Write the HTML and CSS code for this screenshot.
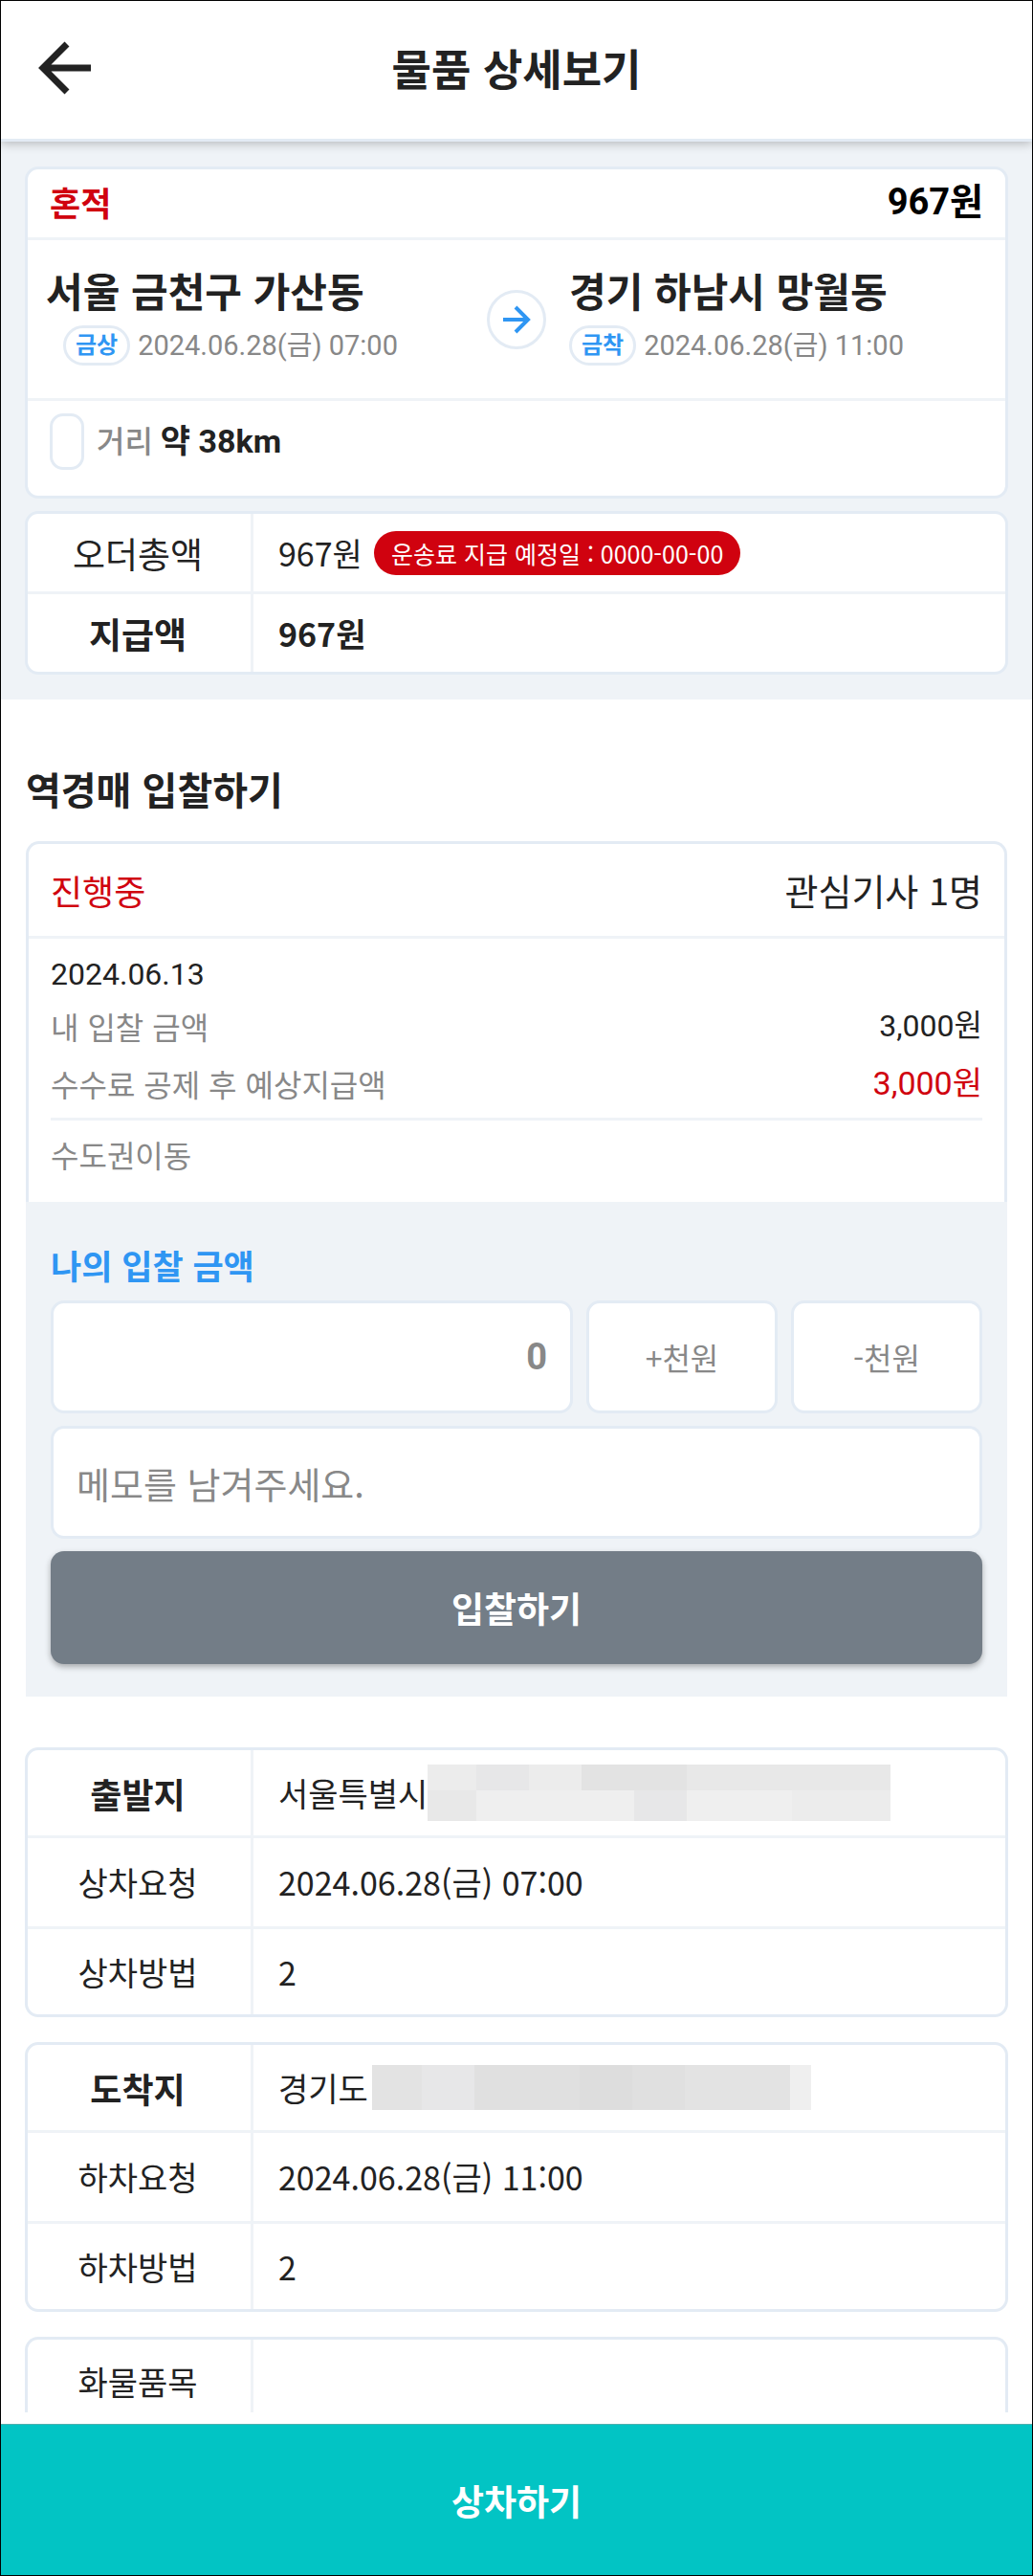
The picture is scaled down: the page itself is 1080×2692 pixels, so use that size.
FILE: index.html
```html
<!DOCTYPE html>
<html lang="ko">
<head>
    <meta charset="UTF-8">
    <meta name="viewport" content="width=device-width, initial-scale=1.0">
    <title>물품 상세보기</title>
    <link rel="stylesheet" href="styles.css">
</head>
<body>
<div class="app">
    <header class="header">
        <a class="back" href="#" aria-label="뒤로">
            <svg width="56" height="56" viewBox="0 0 56 56" fill="none" stroke="#222" stroke-width="7">
                <path d="M31 3L6 28L31 53M5 28H58"/>
            </svg>
        </a>
        <h1 class="header-title">물품 상세보기</h1>
    </header>

    <main class="content">
        <section class="summary">
            <div class="card">
                <div class="card-head">
                    <strong class="load-type">혼적</strong>
                    <strong class="load-price">967원</strong>
                </div>
                <div class="route">
                    <div class="place">
                        <h2 class="place-name">서울 금천구 가산동</h2>
                        <p class="place-time from"><span class="badge">금상</span>2024.06.28(금) 07:00</p>
                    </div>
                    <div class="route-arrow">
                        <svg width="30" height="30" viewBox="0 0 30 30" fill="none" stroke="#2f96f3" stroke-width="4">
                            <path d="M1 15H27M14 2L27 15L14 28"/>
                        </svg>
                    </div>
                    <div class="place">
                        <h2 class="place-name">경기 하남시 망월동</h2>
                        <p class="place-time"><span class="badge">금착</span>2024.06.28(금) 11:00</p>
                    </div>
                </div>
                <div class="distance">
                    <span class="distance-box"></span>
                    <p class="distance-text"><span class="distance-label">거리</span> <strong>약 38km</strong></p>
                </div>
            </div>

            <table class="info pay">
                <tr>
                    <th scope="row">오더총액</th>
                    <td><div class="pay-total">967원<span class="pay-date">운송료 지급 예정일 : 0000-00-00</span></div></td>
                </tr>
                <tr class="strong">
                    <th scope="row">지급액</th>
                    <td>967원</td>
                </tr>
            </table>
        </section>

        <section class="auction">
            <h2 class="section-title">역경매 입찰하기</h2>
            <div class="bid">
                <div class="bid-head">
                    <span class="bid-state">진행중</span>
                    <span class="bid-count">관심기사 1명</span>
                </div>
                <div class="bid-body">
                    <p class="bid-date">2024.06.13</p>
                    <dl class="bid-row">
                        <dt>내 입찰 금액</dt>
                        <dd>3,000원</dd>
                    </dl>
                    <dl class="bid-row expected">
                        <dt>수수료 공제 후 예상지급액</dt>
                        <dd>3,000원</dd>
                    </dl>
                    <p class="bid-memo">수도권이동</p>
                </div>
            </div>
            <form class="bid-form">
                <label class="bid-label" for="amount">나의 입찰 금액</label>
                <div class="amount-row">
                    <input class="field amount" id="amount" type="text" inputmode="numeric" placeholder="0">
                    <button class="step" type="button">+천원</button>
                    <button class="step" type="button">-천원</button>
                </div>
                <input class="field memo" type="text" aria-label="메모" placeholder="메모를 남겨주세요.">
                <button class="submit" type="button">입찰하기</button>
            </form>
        </section>

        <section class="details">
            <table class="info">
                <tr class="lead">
                    <th scope="row">출발지</th>
                    <td><div class="address">서울특별시<span class="mask mask-from"><i class="m2"></i><i class="m4"></i><i class="m2"></i><i class="m5"></i><i class="m5"></i><i class="m3"></i><i class="m3"></i><i class="m3"></i><i class="m3"></i><i class="m3"></i><i class="m1"></i><i class="m1"></i><i class="m1"></i><i class="m4"></i><i class="m1"></i><i class="m1"></i><i class="m2"></i><i class="m2"></i></span></div></td>
                </tr>
                <tr>
                    <th scope="row">상차요청</th>
                    <td>2024.06.28(금) 07:00</td>
                </tr>
                <tr>
                    <th scope="row">상차방법</th>
                    <td>2</td>
                </tr>
            </table>

            <table class="info">
                <tr class="lead">
                    <th scope="row">도착지</th>
                    <td><div class="address">경기도<span class="mask mask-to"><i class="m5"></i><i class="m4"></i><i class="m6"></i><i class="m6"></i><i class="m7"></i><i class="m6"></i><i class="m5"></i><i class="m5"></i><i class="m1"></i></span></div></td>
                </tr>
                <tr>
                    <th scope="row">하차요청</th>
                    <td>2024.06.28(금) 11:00</td>
                </tr>
                <tr>
                    <th scope="row">하차방법</th>
                    <td>2</td>
                </tr>
            </table>

            <table class="info cut">
                <tr>
                    <th scope="row">화물품목</th>
                    <td></td>
                </tr>
            </table>
        </section>
    </main>

    <button class="load-button" type="button">상차하기</button>
</div>
</body>
</html>
```

FILE: styles.css
```css
* {
    box-sizing: border-box;
}
body {
    margin: 0;
    background: #fff;
    color: #222;
    font-family: "Noto Sans CJK KR", "Noto Sans", sans-serif;
    font-size: 32px;
    line-height: 48px;
}
h1, h2, p, dl, dd {
    margin: 0;
}
button, input {
    font-family: inherit;
    margin: 0;
}
.app {
    border: 1px solid #000;
}

/* header */
.header {
    display: grid;
    grid-template-columns: 100px 1fr 100px;
    align-items: center;
    height: 147px;
    padding-bottom: 4px;
    border-bottom: 3px solid #e3ebf4;
    box-shadow: 0 2px 10px rgba(0, 0, 0, 0.25);
    position: relative;
}
.back {
    padding-left: 38px;
    height: 56px;
}
.header-title {
    font-size: 45px;
    line-height: 68px;
    text-align: center;
}

/* summary */
.summary {
    background: #eff3f7;
    padding: 26px 25px;
}
.card {
    border: 3px solid #e3ebf4;
    border-radius: 14px;
    background: #fff;
    margin-bottom: 13px;
}
.card-head {
    display: flex;
    justify-content: space-between;
    align-items: center;
    height: 74px;
    padding: 0 23px 4px;
    border-bottom: 3px solid #eff3f7;
    font-size: 35px;
}
.load-type {
    color: #d0020f;
}
.load-price {
    color: #000;
    font-family: Roboto, "Noto Sans CJK KR", sans-serif;
    font-size: 38px;
}
.route {
    display: grid;
    grid-template-columns: 1fr 62px 1fr;
    column-gap: 24px;
    align-items: center;
    height: 168px;
    padding: 0 19px;
    border-bottom: 3px solid #eff3f7;
}
.place {
    padding-bottom: 10px;
}
.place-name {
    font-size: 42px;
    line-height: 60px;
}
.place-time {
    display: flex;
    align-items: center;
    gap: 8px;
    margin-top: 4px;
    color: #888;
    font-family: Roboto, "Noto Sans CJK KR", sans-serif;
    font-size: 29px;
}
.place-time.from {
    padding-left: 18px;
}
.badge {
    border: 3px solid #e3ebf4;
    border-radius: 22px;
    padding: 0 10px;
    color: #2f96f3;
    font-size: 24px;
    font-weight: bold;
    line-height: 36px;
}
.route-arrow {
    display: flex;
    align-items: center;
    justify-content: center;
    height: 62px;
    border: 3px solid #e3ebf4;
    border-radius: 50%;
}
.distance {
    display: flex;
    align-items: center;
    gap: 13px;
    padding: 13px 23px 27px;
    font-family: Roboto, "Noto Sans CJK KR", sans-serif;
}
.distance-box {
    width: 36px;
    height: 59px;
    border: 3px solid #e3ebf4;
    border-radius: 14px;
}
.distance-text strong {
    font-size: 34px;
}
.distance-label {
    color: #888;
    font-weight: 500;
}

/* tables */
.info {
    width: 100%;
    border: 3px solid #e3ebf4;
    border-radius: 14px;
    border-spacing: 0;
    background: #fff;
    font-size: 34px;
}
.info th, .info td {
    height: 95px;
    padding: 0;
    border-bottom: 3px solid #eff3f7;
    font-weight: normal;
}
.info th {
    width: 236px;
    padding-right: 3px;
    border-right: 3px solid #eff3f7;
}
.info td {
    padding-left: 26px;
    text-align: left;
}
.info tr:first-child th, .info tr:first-child td {
    height: 92px;
}
.info tr:last-child th, .info tr:last-child td {
    border-bottom: 0;
    height: 89px;
}
.info .lead th {
    font-size: 36px;
    font-weight: bold;
}
.pay tr:first-child th, .pay tr:first-child td {
    height: 84px;
}
.pay tr:last-child th, .pay tr:last-child td {
    height: 81px;
}
.pay th {
    font-size: 37px;
}
.pay .strong th, .pay .strong td {
    font-weight: bold;
}
.pay-total {
    display: flex;
    align-items: center;
    gap: 12px;
}
.pay-date {
    padding: 0 18px;
    border-radius: 23px;
    background: #d0020f;
    color: #fff;
    font-size: 25px;
    line-height: 46px;
}

/* auction */
.auction {
    padding: 64px 26px 53px;
}
.section-title {
    font-size: 40px;
    line-height: 58px;
    margin-bottom: 26px;
}
.bid {
    border: 3px solid #e3ebf4;
    border-bottom: 0;
    border-radius: 14px 14px 0 0;
}
.bid-head {
    display: flex;
    justify-content: space-between;
    align-items: center;
    height: 99px;
    padding: 0 23px;
    border-bottom: 3px solid #eff3f7;
    font-size: 36px;
}
.bid-count {
    font-size: 38px;
}
.bid-state, .expected dd {
    color: #d0020f;
}
.bid-body {
    padding: 13px 23px 26px;
}
.bid-row {
    display: flex;
    justify-content: space-between;
    align-items: center;
    height: 60px;
}
.bid-row dt, .bid-memo {
    color: #888;
}
.bid-date, .bid-row dd {
    font-family: Roboto, "Noto Sans CJK KR", sans-serif;
}
.expected dd {
    font-size: 34px;
}
.bid-memo {
    margin-top: 6px;
    padding-top: 11px;
    border-top: 3px solid #eff3f7;
}

/* bid form */
.bid-form {
    display: flex;
    flex-direction: column;
    gap: 13px;
    padding: 42px 26px 34px;
    background: #eff3f7;
}
.bid-label {
    color: #2f96f3;
    font-size: 35px;
    font-weight: bold;
}
.amount-row {
    display: grid;
    grid-template-columns: 546fr 200fr 200fr;
    gap: 14px;
}
.field, .step {
    width: 100%;
    height: 118px;
    border: 3px solid #e3ebf4;
    border-radius: 14px;
    background: #fff;
    color: #888;
}
.field {
    padding: 0 24px;
}
.field::placeholder {
    color: #888;
    opacity: 1;
}
.amount {
    font-family: Roboto, sans-serif;
    font-size: 38px;
    font-weight: bold;
    text-align: right;
}
.memo {
    font-size: 38px;
}
.step {
    font-size: 32px;
}
.submit {
    height: 118px;
    border: 0;
    border-radius: 14px;
    background: #737d87;
    box-shadow: 0 3px 6px rgba(0, 0, 0, 0.3);
    color: #fff;
    font-size: 37px;
    font-weight: bold;
}

/* details */
.details {
    display: flex;
    flex-direction: column;
    gap: 26px;
    padding: 0 25px 12px;
}
.address {
    display: flex;
    align-items: center;
}
.mask {
    display: grid;
}
.mask-from {
    grid-template-columns: 51px repeat(7, 55px) 48px;
    grid-template-rows: 27px 32px;
}
.mask-to {
    grid-template-columns: 52px repeat(7, 55px) 22px;
    grid-template-rows: 47px;
    margin-left: 4px;
}
.m1 { background: #efefef; }
.m2 { background: #ececec; }
.m3 { background: #e8e8e8; }
.m4 { background: #e7e7e8; }
.m5 { background: #e3e3e3; }
.m6 { background: #e0e0e0; }
.m7 { background: #dddddd; }
.info.cut {
    border-bottom: 0;
    border-radius: 14px 14px 0 0;
}
.cut tr:last-child th, .cut tr:last-child td {
    height: 76px;
    padding-top: 12px;
}

.load-button {
    display: block;
    width: 100%;
    height: 158px;
    border: 0;
    border-top: 1px solid #4fb0ae;
    background: #02c4c4;
    color: #fff;
    font-size: 37px;
    font-weight: bold;
}
```
